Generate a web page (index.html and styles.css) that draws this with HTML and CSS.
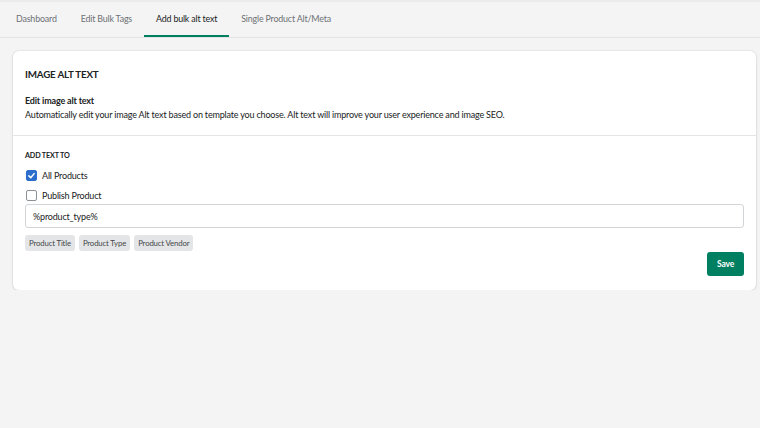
FILE: index.html
```html
<!DOCTYPE html>
<html lang="en">
<head>
    <meta charset="UTF-8">
    <meta name="viewport" content="width=device-width, initial-scale=1.0">
    <title>Add bulk alt text</title>
    <link rel="stylesheet" href="styles.css">
</head>
<body>

    <!-- Top tabs -->
    <nav class="tabs">
        <a class="tab" href="#">Dashboard</a>
        <a class="tab" href="#">Edit Bulk Tags</a>
        <a class="tab active" href="#">Add bulk alt text</a>
        <a class="tab" href="#">Single Product Alt/Meta</a>
    </nav>

    <main class="page">
        <div class="card">
            <div class="card-section">
                <h2 class="card-title">IMAGE ALT TEXT</h2>
                <h3 class="sub-title">Edit image alt text</h3>
                <p class="description">Automatically edit your image Alt text based on template you choose. Alt text will improve your user experience and image SEO.</p>
            </div>

            <div class="card-section form-section">
                <h4 class="label">ADD TEXT TO</h4>

                <div class="check-list">
                    <label class="check-row">
                        <span class="checkbox checked">
                            <svg width="9" height="9" viewBox="0 0 12 12" fill="none" stroke="white" stroke-width="2" stroke-linecap="round" stroke-linejoin="round">
                                <path d="M2.5 6.5l2.5 2.5 4.5-5.5"></path>
                            </svg>
                        </span>
                        All Products
                    </label>
                    <label class="check-row">
                        <span class="checkbox"></span>
                        Publish Product
                    </label>
                </div>

                <input class="text-input" type="text" value="%product_type%">

                <div class="tag-list">
                    <span class="tag">Product Title</span>
                    <span class="tag">Product Type</span>
                    <span class="tag">Product Vendor</span>
                </div>

                <div class="actions">
                    <button class="save-button">Save</button>
                </div>
            </div>
        </div>
    </main>

</body>
</html>
```

FILE: styles.css
```css
* {
    margin: 0;
    padding: 0;
    box-sizing: border-box;
    font-family: Lato, "Open Sans", Arial, sans-serif;
    letter-spacing: -0.02em;
}

body {
    background-color: #f4f4f4;
    color: #202223;
    border-top: 2px solid #ebebeb;
}

.tabs {
    display: flex;
    height: 36px;
    padding-left: 4px;
    border-bottom: 1px solid #e1e3e5;
}

.tab {
    display: flex;
    align-items: center;
    padding: 0 12px;
    font-size: 8.9px;
    color: #6d7175;
    text-decoration: none;
    border-bottom: 2px solid transparent;
}

.tab.active {
    color: #202223;
    border-bottom-color: #008060;
}

.page {
    padding: 13px 4px 0 13px;
}

.card {
    background-color: white;
    border-radius: 6px;
    box-shadow: 0 0 0 1px rgba(63, 63, 68, 0.05), 0 1px 3px rgba(63, 63, 68, 0.12);
}

.card-section {
    padding: 16px 12px 14px 12px;
}

.card-section + .card-section {
    border-top: 1px solid #e4e5e7;
}

.card-title {
    font-size: 9.8px;
    line-height: 14px;
    font-weight: 700;
    margin-bottom: 14px;
}

.sub-title {
    font-size: 9px;
    line-height: 12px;
    font-weight: 700;
}

.description {
    font-size: 9px;
    line-height: 12px;
    margin-top: 2px;
}

.form-section {
    padding-top: 15px;
    padding-bottom: 14px;
}

.label {
    font-size: 7.2px;
    line-height: 10px;
    font-weight: 700;
    margin-bottom: 5px;
}

.check-list {
    display: flex;
    flex-direction: column;
    gap: 2px;
}

.check-row {
    display: flex;
    align-items: center;
    gap: 5px;
    font-size: 9px;
    height: 18px;
}

.checkbox {
    width: 11px;
    height: 11px;
    border: 1px solid #8c9196;
    border-radius: 2px;
    display: flex;
    align-items: center;
    justify-content: center;
    margin-left: 1px;
}

.checkbox.checked {
    background-color: #2c6ecb;
    border-color: #2c6ecb;
}

.text-input {
    display: block;
    width: 100%;
    height: 24px;
    padding: 0 7px;
    border: 1px solid #d2d5d8;
    border-radius: 3px;
    font-size: 9px;
    color: #202223;
}

.tag-list {
    display: flex;
    gap: 4px;
    margin-top: 7px;
}

.tag {
    display: flex;
    align-items: center;
    height: 16px;
    background-color: #e4e5e7;
    border-radius: 3px;
    padding: 0 4px;
    font-size: 7.8px;
    color: #44474a;
}

.actions {
    display: flex;
    justify-content: flex-end;
    margin-top: 1px;
}

.save-button {
    background-color: #008060;
    color: white;
    border: none;
    border-radius: 3px;
    width: 37px;
    height: 24px;
    font-size: 8.5px;
    font-weight: 700;
    cursor: pointer;
}
```
